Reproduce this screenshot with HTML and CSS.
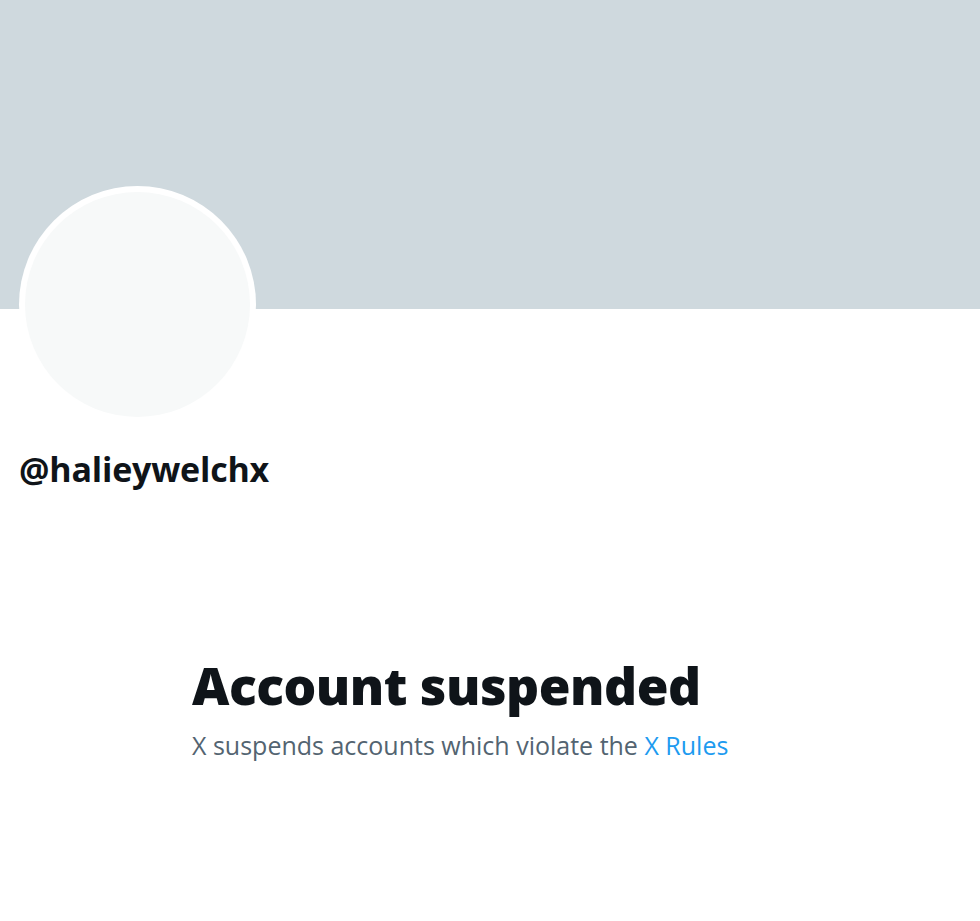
FILE: index.html
```html
<!DOCTYPE html>
<html lang="en">
<head>
<meta charset="utf-8">
<title>@halieywelchx</title>
<link rel="stylesheet" href="styles.css">
</head>
<body>
<main class="profile">
  <div class="banner"></div>
  <div class="header">
    <div class="avatar"><div class="avatar-inner"></div></div>
    <h2 class="handle">@halieywelchx</h2>
  </div>
  <section class="empty">
    <h1 class="empty-title">Account suspended</h1>
    <p class="empty-text">X suspends accounts which violate the <a class="link" href="#">X Rules</a></p>
  </section>
</main>
</body>
</html>
```
FILE: styles.css
```css
html, body {
  margin: 0;
  padding: 0;
  background: #ffffff;
}
body {
  font-family: "Open Sans", "Noto Sans", "Liberation Sans", sans-serif;
  color: #0f1419;
  width: 980px;
  height: 921px;
  overflow: hidden;
}
.banner {
  height: 309px;
  background: #cfd9de;
}
.header {
  padding: 0 19px;
}
.avatar {
  width: 237px;
  height: 237px;
  margin-top: -123px;
  border-radius: 50%;
  background: #ffffff;
  padding: 6px;
  box-sizing: border-box;
}
.avatar-inner {
  width: 100%;
  height: 100%;
  border-radius: 50%;
  background: #f7f9f9;
}
.handle {
  margin: 26px 0 0;
  font-size: 34px;
  font-weight: 700;
  line-height: 40px;
  letter-spacing: -0.2px;
}
.empty {
  padding: 166px 0 0 192px;
}
.empty-title {
  margin: 0;
  font-size: 51.5px;
  font-weight: 800;
  line-height: 60px;
  letter-spacing: -0.5px;
}
.empty-text {
  margin: 15px 0 0;
  font-size: 25px;
  line-height: 30px;
  color: #536471;
}
.link {
  color: #1d9bf0;
  text-decoration: none;
}
```
